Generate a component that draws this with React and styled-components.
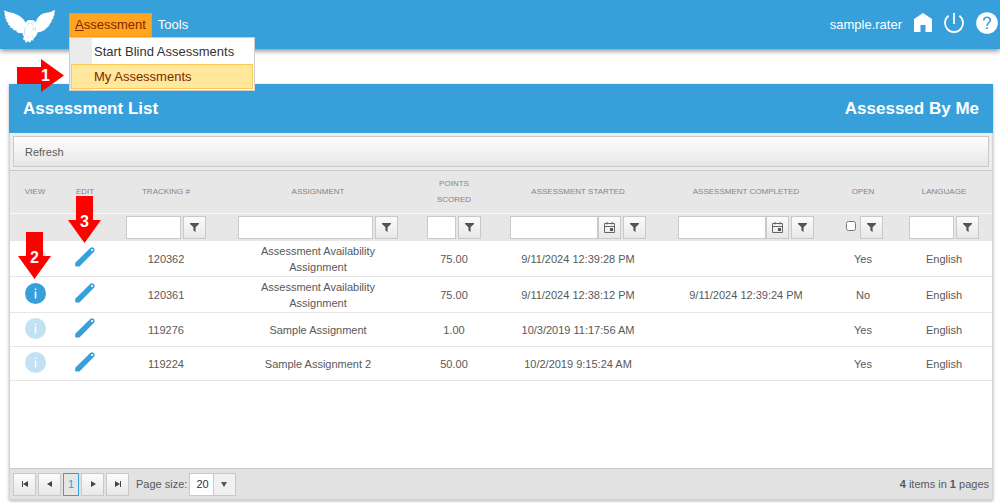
import React, { Component } from 'react';
import styled, { createGlobalStyle, css } from 'styled-components';

const GlobalStyle = createGlobalStyle`
  :root {
    --mainBlue: #379fd9;
    --lineGrey: #c9c9c9;
  }
  * {
    box-sizing: border-box;
  }
  html, body {
    height: 100%;
  }
  body {
    margin: 0;
    background: #fff;
    color: #595959;
    font: 11px/16px "Liberation Sans", Arial, sans-serif;
  }
  #root {
    min-height: 100%;
    display: flex;
    flex-direction: column;
  }
  button, input, select {
    font: inherit;
    color: inherit;
    margin: 0;
  }
`;

const columns = [
  { title: 'View', width: 50 },
  { title: 'Edit', width: 50 },
  { title: 'Tracking #', width: 112, filter: 'text' },
  { title: 'Assignment', width: 192, filter: 'text' },
  { title: 'Points Scored', width: 80, filter: 'text', narrow: true },
  { title: 'Assessment Started', width: 168, filter: 'date' },
  { title: 'Assessment Completed', width: 168, filter: 'date' },
  { title: 'Open', width: 66, filter: 'check', narrow: true },
  { title: 'Language', width: 96, filter: 'text', narrow: true },
];

const assessments = [
  { id: '120362', name: 'Assessment Availability Assignment', points: '75.00', started: '9/11/2024 12:39:28 PM', completed: '', open: 'Yes', language: 'English', editStep: 3 },
  { id: '120361', name: 'Assessment Availability Assignment', points: '75.00', started: '9/11/2024 12:38:12 PM', completed: '9/11/2024 12:39:24 PM', open: 'No', language: 'English', viewable: true, viewStep: 2 },
  { id: '119276', name: 'Sample Assignment', points: '1.00', started: '10/3/2019 11:17:56 AM', completed: '', open: 'Yes', language: 'English' },
  { id: '119224', name: 'Sample Assignment 2', points: '50.00', started: '10/2/2019 9:15:24 AM', completed: '', open: 'Yes', language: 'English' },
];

const Owl = () => (
  <svg width="52" height="36" viewBox="0 0 156 108" aria-hidden="true">
    <path fill="#fff" d="M3 10 C12 15 24 17 36 20 C50 25 61 33 68 47 L71 42 C77 39 88 38 95 42 L99 46 C101 33 110 24 122 19 C134 17 146 15 155 9 L156 12 L153 20 L156 20 L150 31 L152 32 L144 43 L147 43 L138 54 L140 55 L130 64 L124 70 L112 75 L104 76 C102 84 97 91 92 94 L91 101 L86 99 L81 107 L75 103 L68 107 L65 99 L59 97 L63 90 C60 86 59 82 59 79 L48 78 L40 75 L42 71 L30 69 L31 65 L20 61 L23 58 L14 52 L17 49 L8 41 L12 40 L4 29 L9 31 L3 20 L6 20 Z" />
    <g fill="none" stroke="#8ec9ea" strokeWidth="1.5">
      <path d="M73 47 L82 50 L94 46 M74 54 h4 M87 54 h4 M69 59 C64 66 63 76 66 84 M97 61 L98 73 M90 60 L93 66 L86 70 M72 92 L75 87 M88 91 L90 85" />
    </g>
  </svg>
);

const HomeIcon = () => (
  <svg width="18" height="20" viewBox="0 0 18 20" aria-hidden="true">
    <path fill="#fff" d="M9 0 L18 6 V19 H11.5 V12 H6.5 V19 H0 V6 Z" />
  </svg>
);

const PowerIcon = () => (
  <svg width="20" height="20" viewBox="0 0 20 20" fill="none" stroke="#fff" strokeWidth="1.8" aria-hidden="true">
    <path d="M10 0 V11 M4.6 2.8 A9 9 0 1 0 15.4 2.8" />
  </svg>
);

const HelpIcon = () => (
  <svg width="22" height="22" viewBox="0 0 22 22" aria-hidden="true">
    <circle cx="11" cy="11" r="10.8" fill="#fff" />
    <path fill="none" stroke="#379fd9" strokeWidth="1.6" d="M7.8 8.4 C7.8 4.2 14.2 4.4 14.2 8.2 C14.2 10.6 11 11 11 14" />
    <path fill="#379fd9" d="M10.1 15.2 h1.8 v1.8 h-1.8 Z" />
  </svg>
);

const InfoIcon = () => (
  <svg width="21" height="21" viewBox="0 0 21 21" aria-hidden="true">
    <circle cx="10.5" cy="10.5" r="10.5" fill="#379fd9" />
    <path fill="#fff" d="M9.8 5.4 h1.5 v1.7 h-1.5 Z M9.8 8.6 h1.5 v7 h-1.5 Z" />
  </svg>
);

const PencilIcon = () => (
  <svg width="20" height="20" viewBox="0 0 20 20" aria-hidden="true">
    <path fill="#379fd9" d="M.5 15.6 L15.2 1 Q17 -.4 18.8 1.2 Q20.4 3 19 4.8 L4.4 19.5 H1 L0 18.6 Z" />
    <circle cx="17" cy="3" r="1.1" fill="#fff" />
  </svg>
);

const FunnelIcon = () => (
  <svg width="9" height="9" viewBox="0 0 9 9" aria-hidden="true">
    <path fill="#555" d="M0 0 H9 V1 L5.6 4.2 V9 L3.4 7.4 V4.2 L0 1 Z" />
  </svg>
);

const CalendarIcon = () => (
  <svg width="11" height="11" viewBox="0 0 11 11" aria-hidden="true">
    <path fill="none" stroke="#666" d="M.5 1.5 H10.5 V10.5 H.5 Z M.5 4.5 H10.5 M3 0 V2.5 M8 0 V2.5" />
    <path fill="#555" d="M6 6 H9 V9 H6 Z" />
  </svg>
);

const pagerPaths = {
  'First page': 'M0 0 H1 V6 H0 Z M6 0 V6 L1 3 Z',
  'Previous page': 'M5 0 V6 L0 3 Z',
  'Next page': 'M1 0 V6 L6 3 Z',
  'Last page': 'M0 0 V6 L5 3 Z M5 0 H6 V6 H5 Z',
};

const PagerIcon = ({ name }) => (
  <svg width="6" height="6" viewBox="0 0 6 6" aria-hidden="true">
    <path fill="#444" d={pagerPaths[name]} />
  </svg>
);

const Callout = ({ step, side }) => (
  <CalloutWrapper $side={side}>
    {side ? (
      <svg width="47" height="33" viewBox="0 0 47 33" aria-hidden="true">
        <path fill="#f00" d="M0 8 H24 V0 L47 16.5 L24 33 V25 H0 Z" />
      </svg>
    ) : (
      <svg width="33" height="47" viewBox="0 0 33 47" aria-hidden="true">
        <path fill="#f00" d="M8 0 H25 V24 H33 L16.5 47 L0 24 H8 Z" />
      </svg>
    )}
    <b>{step}</b>
  </CalloutWrapper>
);

const FilterButton = ({ title }) => (
  <SquareButton type="button" aria-label={`Filter ${title}`}>
    <FunnelIcon />
  </SquareButton>
);

const Filter = ({ title, filter, narrow }) => (
  <FilterGroup $narrow={narrow}>
    {filter === 'check' ? (
      <FilterCheck type="checkbox" aria-label={title} />
    ) : (
      <FilterField>
        <FilterInput type="text" aria-label={title} />
        {filter === 'date' && (
          <SquareButton type="button" aria-label={`Pick ${title} date`}>
            <CalendarIcon />
          </SquareButton>
        )}
      </FilterField>
    )}
    <FilterButton title={title} />
  </FilterGroup>
);

export default class App extends Component {
  state = {
    menuOpen: true,
  };

  toggleMenu = () => {
    this.setState({
      menuOpen: !this.state.menuOpen,
    });
  }

  render() {
    return (
      <>
        <GlobalStyle />
        <Header>
          <Logo href="#" aria-label="Home"><Owl /></Logo>
          <Menu>
            <MenuEntry>
              <MenuButton type="button" $active={this.state.menuOpen} onClick={this.toggleMenu}>
                <u>A</u>ssessment
              </MenuButton>
              {this.state.menuOpen && (
                <DropDown>
                  <DropDownLink href="#">Start Blind Assessments</DropDownLink>
                  <DropDownLink href="#" $active>
                    My Assessments
                    <Callout step={1} side />
                  </DropDownLink>
                </DropDown>
              )}
            </MenuEntry>
            <MenuButton type="button">Tools</MenuButton>
          </Menu>
          <UserName>sample.rater</UserName>
          <Tools>
            <a href="#" aria-label="Start page"><HomeIcon /></a>
            <a href="#" aria-label="Sign out"><PowerIcon /></a>
            <a href="#" aria-label="Help"><HelpIcon /></a>
          </Tools>
        </Header>

        <Panel>
          <PanelTitle>
            <h1>Assessment List</h1>
            <h2>Assessed By Me</h2>
          </PanelTitle>
          <Toolbar>
            <RefreshButton type="button">Refresh</RefreshButton>
          </Toolbar>
          <Grid>
            <colgroup>
              {columns.map(col => <Col key={col.title} $width={col.width} />)}
            </colgroup>
            <thead>
              <tr>
                {columns.map(col => <HeadCell key={col.title} scope="col">{col.title}</HeadCell>)}
              </tr>
              <tr>
                {columns.map(col => (
                  <FilterCell key={col.title}>
                    {col.filter && <Filter {...col} />}
                  </FilterCell>
                ))}
              </tr>
            </thead>
            <tbody>
              {assessments.map(item => (
                <tr key={item.id}>
                  <Cell>
                    <IconLink href="#" aria-label={`View ${item.id}`} $dim={!item.viewable}>
                      <InfoIcon />
                      {item.viewStep && <Callout step={item.viewStep} />}
                    </IconLink>
                  </Cell>
                  <Cell>
                    <IconLink href="#" aria-label={`Edit ${item.id}`}>
                      <PencilIcon />
                      {item.editStep && <Callout step={item.editStep} />}
                    </IconLink>
                  </Cell>
                  <Cell>{item.id}</Cell>
                  <Cell $wide>{item.name}</Cell>
                  <Cell>{item.points}</Cell>
                  <Cell>{item.started}</Cell>
                  <Cell>{item.completed}</Cell>
                  <Cell>{item.open}</Cell>
                  <Cell>{item.language}</Cell>
                </tr>
              ))}
            </tbody>
          </Grid>
          <Pager>
            <SquareButton type="button" aria-label="First page"><PagerIcon name="First page" /></SquareButton>
            <SquareButton type="button" aria-label="Previous page"><PagerIcon name="Previous page" /></SquareButton>
            <PageButton type="button">1</PageButton>
            <SquareButton type="button" aria-label="Next page"><PagerIcon name="Next page" /></SquareButton>
            <SquareButton type="button" aria-label="Last page"><PagerIcon name="Last page" /></SquareButton>
            <PageSize>
              Page size:
              <SelectBox>
                <select defaultValue="20">
                  <option>10</option>
                  <option>20</option>
                  <option>50</option>
                </select>
                <svg width="6" height="5" viewBox="0 0 6 5" aria-hidden="true"><path fill="#555" d="M0 0 H6 L3 5 Z" /></svg>
              </SelectBox>
            </PageSize>
            <PagerInfo><b>4</b> items in <b>1</b> pages</PagerInfo>
          </Pager>
        </Panel>
      </>
    )
  }
}

const Header = styled.header`
  display: flex;
  align-items: center;
  height: 49px;
  padding: 0 2px 0 3px;
  background: var(--mainBlue);
  box-shadow: 0 2px 5px rgba(0, 0, 0, 0.45);
  color: #fff;
  font-size: 13px;
  a {
    display: block;
    color: inherit;
  }
  svg {
    display: block;
  }
`

const Logo = styled.a`
  width: 66px;
`

const Menu = styled.nav`
  display: flex;
`

const MenuEntry = styled.div`
  position: relative;
`

const MenuButton = styled.button`
  height: 24px;
  padding: 0 5px;
  border: 1px solid ${props => (props.$active ? '#ff9a10' : 'transparent')};
  background: ${props => (props.$active ? '#ffa51f' : 'transparent')};
  color: ${props => (props.$active ? '#7f2600' : '#fff')};
`

const DropDown = styled.div`
  position: absolute;
  z-index: 2;
  top: 100%;
  left: 0;
  width: 186px;
  padding: 1px;
  border: 1px solid #cfcfcf;
  background: linear-gradient(to right, #ebebeb 22px, #fff 22px);
`

const DropDownLink = styled.a`
  && {
    position: relative;
    height: 25px;
    padding-left: 22px;
    border: 1px solid transparent;
    color: #333;
    line-height: 23px;
    text-decoration: none;
    white-space: nowrap;
    ${props => props.$active && css`
      border-color: #ffc859;
      background: #ffe79c;
      color: #7f2600;
    `}
  }
`

const CalloutWrapper = styled.span`
  position: absolute;
  z-index: 3;
  color: #fff;
  font-size: 16px;
  line-height: 16px;
  ${props => props.$side ? css`
    right: 100%;
    top: -6px;
    margin-right: 8px;
  ` : css`
    bottom: 100%;
    left: 50%;
    margin: 0 0 4px -17px;
  `}
  svg {
    display: block;
  }
  b {
    position: absolute;
    top: ${props => (props.$side ? 9 : 18)}px;
    left: ${props => (props.$side ? 24 : 12)}px;
  }
`

const UserName = styled.span`
  margin-left: auto;
  padding-right: 12px;
`

const Tools = styled.div`
  display: flex;
  align-items: center;
  gap: 12px;
  padding-bottom: 4px;
`

const Panel = styled.main`
  flex: 1;
  display: flex;
  flex-direction: column;
  margin: 35px 7px 3px 9px;
  border: 1px solid #d4d4d4;
  border-top: 0;
  box-shadow: 0 1px 3px rgba(0, 0, 0, 0.3);
`

const PanelTitle = styled.div`
  display: flex;
  align-items: center;
  justify-content: space-between;
  height: 49px;
  margin: 0 -1px;
  padding: 0 14px;
  background: var(--mainBlue);
  color: #fff;
  h1, h2 {
    margin: 0;
    font-size: 17px;
    line-height: 20px;
  }
`

const Toolbar = styled.div`
  padding: 3px;
  border-bottom: 1px solid var(--lineGrey);
  background: #ededed;
`

const RefreshButton = styled.button`
  display: block;
  width: 100%;
  height: 31px;
  padding: 0 11px;
  border: 1px solid var(--lineGrey);
  background: linear-gradient(#fdfdfd, #e6e6e6);
  text-align: left;
`

const Grid = styled.table`
  width: 100%;
  table-layout: fixed;
  border-collapse: separate;
  border-spacing: 0;
  text-align: center;
`

const Col = styled.col`
  width: ${props => props.$width}px;
`

const HeadCell = styled.th`
  height: 43px;
  padding: 0 16px;
  border-bottom: 1px solid #f8f8f8;
  background: #e7e7e7;
  color: #858585;
  font-size: 8px;
  font-weight: normal;
  text-transform: uppercase;
  &:nth-child(-n+2), &:nth-child(n+6) {
    padding: 0;
  }
`

const FilterCell = styled.td`
  height: 27px;
  padding: 0;
  background: #e7e7e7;
`

const FilterGroup = styled.div`
  display: flex;
  justify-content: flex-end;
  gap: 2px;
  padding: 0 ${props => (props.$narrow ? 13 : 16)}px;
`

const FilterField = styled.div`
  flex: 1;
  display: flex;
  min-width: 0;
`

const FilterInput = styled.input`
  flex: 1;
  min-width: 0;
  height: 23px;
  padding: 2px 4px;
  border: 1px solid var(--lineGrey);
`

const FilterCheck = styled.input`
  flex: none;
  width: 10px;
  height: 10px;
  && {
    margin: 5px 2px 0 0;
  }
`

const SquareButton = styled.button`
  flex: none;
  display: flex;
  align-items: center;
  justify-content: center;
  width: 23px;
  height: 23px;
  padding: 0;
  border: 1px solid var(--lineGrey);
  background: linear-gradient(#fbfbfb, #e8e8e8);
`

const Cell = styled.td`
  height: 34px;
  padding: ${props => (props.$wide ? '2px 30px 1px' : '0')};
  border-bottom: 1px solid #e6e6e6;
`

const IconLink = styled.a`
  position: relative;
  display: inline-block;
  vertical-align: middle;
  padding-bottom: 3px;
  > svg {
    display: block;
    opacity: ${props => (props.$dim ? 0.3 : 1)};
  }
`

const Pager = styled.footer`
  display: flex;
  align-items: center;
  gap: 2px;
  height: 31px;
  margin-top: auto;
  padding: 0 3px;
  border-top: 1px solid var(--lineGrey);
  background: #e2e2e2;
`

const PageButton = styled.button`
  width: 16px;
  height: 23px;
  padding: 0;
  border: 1px solid var(--mainBlue);
  background: #e6e6e6;
  && {
    color: var(--mainBlue);
  }
`

const PageSize = styled.label`
  display: flex;
  align-items: center;
  gap: 2px;
  padding-left: 5px;
`

const SelectBox = styled.span`
  display: flex;
  align-items: center;
  width: 47px;
  height: 23px;
  border: 1px solid var(--lineGrey);
  background: linear-gradient(to right, #fff 23px, var(--lineGrey) 23px, var(--lineGrey) 24px, #f1f1f1 24px);
  select {
    appearance: none;
    width: 100%;
    height: 100%;
    padding: 0 0 0 6px;
    border: 0;
    background: none;
    color: #333;
  }
  svg {
    flex: none;
    margin-right: 8px;
    pointer-events: none;
  }
`

const PagerInfo = styled.span`
  margin-left: auto;
`
